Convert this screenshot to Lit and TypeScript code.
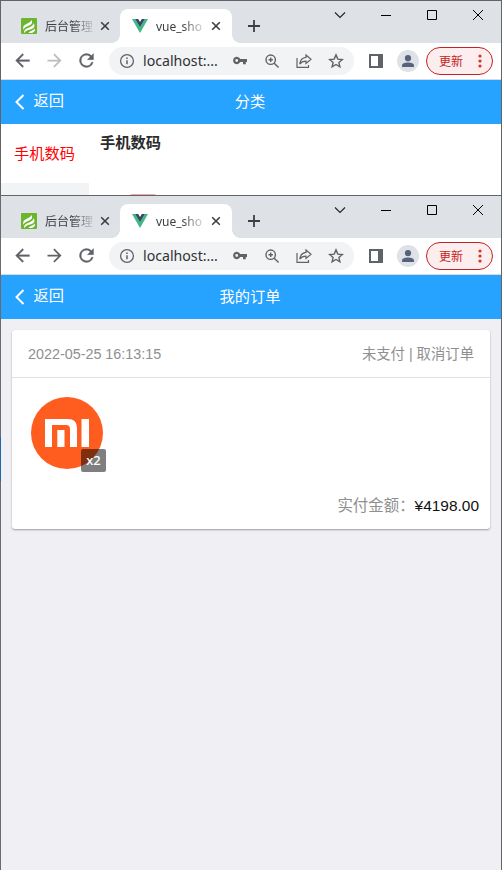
import { LitElement, html, css, svg } from "lit";
import { customElement, property } from "lit/decorators.js";

const icon = (name: string, size: number, body: unknown, box = 24) =>
  html`<svg class="icon ${name}" width=${size} height=${size} viewBox="0 0 ${box} ${box}">${body}</svg>`;

const closeTab = icon("close", 10, svg`<path d="M1.200 1.200L8.800 8.800M8.800 1.200L1.200 8.800" stroke="#3c4043" stroke-width="1.600" fill="none"/>`, 10);

@customElement("browser-chrome")
class BrowserChrome extends LitElement {
  @property({ type: Boolean }) forward = false;

  static styles = css`
    :host { display: block; font-family: "Noto Sans", "Noto Sans CJK SC", sans-serif; color: #3c4043; }
    svg { display: block; flex: none; }
    .strip { height: 42px; background: #dee1e6; display: flex; }
    .tab { display: flex; align-items: center; height: 34px; margin-top: 8px; box-sizing: border-box; font-size: 12px; }
    .idle { width: 119px; padding-left: 20px; }
    .active { width: 112px; padding-left: 12px; background: #fff; border-radius: 8px 8px 0 0; position: relative; }
    .active::before, .active::after { content: ""; position: absolute; bottom: 0; width: 8px; height: 8px; }
    .active::before { left: -8px; background: radial-gradient(circle at 0 0, transparent 7.5px, #fff 8px); }
    .active::after { right: -8px; background: radial-gradient(circle at 100% 0, transparent 7.5px, #fff 8px); }
    .name { width: 48px; margin-left: 8px; white-space: nowrap; line-height: 20px; padding-top: 1px;
      -webkit-mask-image: linear-gradient(90deg, #000 55%, rgba(0,0,0,.15)); mask-image: linear-gradient(90deg, #000 55%, rgba(0,0,0,.15)); }
    .close { margin-left: 7px; }
    .plus { margin: 19px 0 0 16px; }
    .wins { display: flex; margin-left: auto; padding: 8px 17px 0 0; gap: 34px; height: 12px; }
    .bar { height: 36px; background: #fff; border-bottom: 1px solid #d8dbdf; display: flex; align-items: center; padding: 0 8px 0 11px; }
    .nav { width: 97px; display: flex; gap: 11px; padding-bottom: 1px; }
    .omni { width: 245px; height: 28px; border-radius: 14px; background: #f1f3f4; display: flex; align-items: center; padding: 0 10px; box-sizing: border-box; }
    .url { font-size: 14.150px; line-height: 20px; color: #303134; margin-left: 8px; width: 81px; white-space: nowrap; }
    .tools { display: flex; gap: 16px; margin-left: 8px; }
    .side { margin-left: 15px; }
    .avatar { margin-left: 14px; }
    .update { margin-left: 7px; box-sizing: border-box; width: 67px; height: 28px; border: 1px solid #c5221f; border-radius: 14px; background: #fceeee; color: #c5221f; display: flex; align-items: center; padding-left: 12px; font-size: 12px; }
    .label { padding-top: 2px; }
    .dots { margin-left: 9.500px; }
  `;

  render() {
    return html`
      <div class="strip">
        <div class="tab idle">
          ${icon("leaf", 16, svg`<rect width="16" height="16" rx="1" fill="#6bb52f"/>
            <path d="M2.200 9.500C2.500 5.500 9 6 10.500 2C12.500 5.500 9.500 7 6.500 8.300C4.300 9.200 3 10.300 2.400 12Z M3 14C3.500 9.500 11.500 10 12.800 5.300C15 10 11.500 10.800 8 11.800C5.800 12.500 4.300 13.300 3.700 15Z M7.500 15C8.500 12.800 12.500 13 14 10.300C14.300 13.500 12.500 15 9.500 15Z" fill="#fff"/>`, 16)}
          <span class="name">后台管理</span>${closeTab}
        </div>
        <div class="tab active">
          ${icon("vue", 16, svg`<path d="M0 1H3.300L8 9.200L12.700 1H16L8 15Z" fill="#41b883"/><path d="M3.200 1H6.200L8 4.100L9.800 1H12.800L8 9.300Z" fill="#35495e"/>`, 16)}
          <span class="name">vue_sho</span>${closeTab}
        </div>
        ${icon("plus", 12, svg`<path d="M6 0V12M0 6H12" stroke="#3c4043" stroke-width="1.8"/>`, 12)}
        <div class="wins">
          ${icon("", 12, svg`<path d="M1 3.500L6 8.500L11 3.500" fill="none" stroke="#222" stroke-width="1.100"/>`, 12)}
          ${icon("", 12, svg`<path d="M1 6.500H11" stroke="#000"/>`, 12)}
          ${icon("", 12, svg`<path d="M1.500 1.500H10.500V10.500H1.500Z" fill="none" stroke="#000"/>`, 12)}
          ${icon("", 12, svg`<path d="M1 1L11 11M11 1L1 11" stroke="#000"/>`, 12)}
        </div>
      </div>
      <div class="bar">
        <div class="nav">
          ${icon("", 21, svg`<path d="M20 11H7.830l5.590-5.590L12 4l-8 8 8 8 1.410-1.410L7.830 13H20z" fill="#5f6368" stroke="#5f6368" stroke-width=".3"/>`)}
          ${icon("", 21, svg`<path d="M12 4l-1.410 1.410L16.170 11H4v2h12.170l-5.580 5.590L12 20l8-8z" fill=${this.forward ? "#5f6368" : "#babcbe"}/>`)}
          ${icon("", 21, svg`<path d="M17.650 6.350A8 8 0 1 0 19.730 14h-2.080A6 6 0 1 1 12 6c1.660 0 3.140.69 4.220 1.780L13 11h7V4z" fill="#5f6368" stroke="#5f6368" stroke-width=".4"/>`)}
        </div>
        <div class="omni">
          ${icon("", 16, svg`<circle cx="8" cy="8" r="6.400" fill="none" stroke="#5f6368" stroke-width="1.300"/><path d="M8 7.200V11.300M8 4.500V6" stroke="#5f6368" stroke-width="1.500"/>`, 16)}
          <span class="url">localhost:...</span>
          <div class="tools">
            ${icon("", 16, svg`<path fill-rule="evenodd" d="M8.200 6A3.700 3.700 0 1 0 8.200 9H11V11.300H13.800V9H15V6ZM4.700 6.100A1.400 1.400 0 1 1 4.700 8.900A1.400 1.400 0 1 1 4.700 6.100Z" fill="#5f6368"/>`, 16)}
            ${icon("", 16, svg`<g fill="none" stroke="#5f6368" stroke-width="1.400"><circle cx="6.700" cy="6.700" r="4.700"/><path d="M10.200 10.200L14.600 14.600M6.700 4.500V8.900M4.500 6.700H8.900"/></g>`, 16)}
            ${icon("", 16, svg`<g fill="none" stroke="#5f6368" stroke-width="1.200"><path d="M1 5V14.300H12.500V12"/><path d="M10 2L15 6.300L10 10.500V8.200C7 8.200 5.300 9 3.700 11.200C4.200 7.500 6.500 4.700 10 4.400Z"/></g>`, 16)}
            ${icon("", 16, svg`<path d="M8 1.900L9.800 6.100L14.300 6.500L10.900 9.400L11.900 13.900L8 11.500L4.100 13.900L5.100 9.400L1.700 6.500L6.200 6.100Z" fill="none" stroke="#5f6368" stroke-width="1.400"/>`, 16)}
          </div>
        </div>
        ${icon("side", 14, svg`<path fill-rule="evenodd" d="M0 0H14V14H0ZM2 2V12H9V2Z" fill="#5f6368"/>`, 14)}
        ${icon("avatar", 22, svg`<circle cx="11" cy="11" r="11" fill="#dee1e6"/><circle cx="11" cy="8.200" r="3.100" fill="#56627a"/><path d="M5 17V15.500C5 13.300 8.500 12.500 11 12.500S17 13.300 17 15.500V17Z" fill="#56627a"/>`, 22)}
        <div class="update"><span class="label">更新</span>${icon("dots", 14, svg`<g fill="#d93025"><circle cx="7" cy="2" r="1.600"/><circle cx="7" cy="7" r="1.600"/><circle cx="7" cy="12" r="1.600"/></g>`, 14)}</div>
      </div>`;
  }
}

@customElement("page-header")
class PageHeader extends LitElement {
  @property() heading = "";

  static styles = css`
    :host { display: grid; grid-template-columns: 1fr auto 1fr; align-items: center; height: 44px; background: #26a2ff; color: #fff; padding-right: 2px; box-sizing: border-box;
      font: 15.25px/22px "Liberation Sans", "Noto Sans CJK SC", sans-serif; }
    .back { display: flex; align-items: center; padding: 0 0 2px 13px; }
    .back svg { margin-right: 8.500px; margin-top: 1px; }
  `;

  render() {
    return html`
      <span class="back"><svg width="11" height="16" viewBox="0 0 11 16"><path d="M9.500 1L2.500 8L9.500 15" fill="none" stroke="#fff" stroke-width="2"/></svg>返回</span>
      <span>${this.heading}</span>`;
  }
}

@customElement("app-root")
class AppRoot extends LitElement {
  static styles = css`
    :host { display: block; height: 870px; overflow: hidden; font-family: "Liberation Sans", "Noto Sans CJK SC", sans-serif; font-size: 15.25px; line-height: 22px; }
    .window { box-sizing: border-box; border: solid #646468; border-width: 1px 1px 0; }
    .first { height: 195px; overflow: hidden; background: #fff; }
    .second { height: 675px; background: #efeff4; border-left-color: #6b6b6f; position: relative; }
    .edge { position: absolute; left: -1px; top: 241px; width: 1px; height: 44px; background: #2067a8; }
    .categories { display: flex; }
    .menu { width: 88px; height: 71px; background: #f2f3f5; }
    .current { height: 59px; box-sizing: border-box; padding: 19px 0 0 13px; background: #fff; color: #f00; }
    .group { padding: 8px 0 0 11px; font-weight: 700; color: #2c2c2c; }
    .thumb { width: 26px; height: 2px; margin: 40px 0 0 41px; background: #f4a99e; border-radius: 4px 4px 0 0; }
    .card { margin: 11px; width: 478px; height: 199px; box-sizing: border-box; display: flex; flex-direction: column; background: #fff; border-radius: 3px; box-shadow: 0 1px 2px rgba(0,0,0,.35); }
    .head { height: 48px; box-sizing: border-box; border-bottom: 1px solid #dfe0e3; padding: 0 16px; display: flex; align-items: center; justify-content: space-between; font-size: 14.350px; color: #8f8f8f; }
    .goods { width: 76px; height: 76px; margin: 18px 0 0 17px; position: relative; }
    .goods svg { display: block; }
    .count { position: absolute; left: 52px; top: 53px; width: 25px; height: 23px; border-radius: 2px; background: rgba(0,0,0,.5); color: #fff; font: 500 13px/23px "Noto Sans", sans-serif; text-align: center; }
    .total { margin-top: auto; padding: 0 11px 12px; text-align: right; color: #8f8f8f; font-size: 15.450px; }
    .price { color: #111; }
  `;

  render() {
    return html`
      <section class="window first">
        <browser-chrome></browser-chrome>
        <page-header heading="分类"></page-header>
        <div class="categories">
          <div class="menu"><div class="current">手机数码</div></div>
          <div><div class="group">手机数码</div><div class="thumb"></div></div>
        </div>
      </section>
      <section class="window second">
        <browser-chrome forward></browser-chrome>
        <page-header heading="我的订单"></page-header>
        <article class="card">
          <div class="head"><span>2022-05-25 16:13:15</span><span>未支付 | 取消订单</span></div>
          <div class="goods">
            <svg width="76" height="76" viewBox="0 0 76 76"><circle cx="38" cy="37" r="36" fill="#ff5c20"/>
              <path d="M16 23H39Q48 23 48 32V51H41V33Q41 29 37 29H23V51H16ZM28.300 34H35.500V51H28.300ZM52.500 23H60V51H52.500Z" fill="#fff"/></svg>
            <span class="count">x2</span>
          </div>
          <div class="total">实付金额：<span class="price">¥4198.00</span></div>
        </article>
        <span class="edge"></span>
      </section>`;
  }
}
